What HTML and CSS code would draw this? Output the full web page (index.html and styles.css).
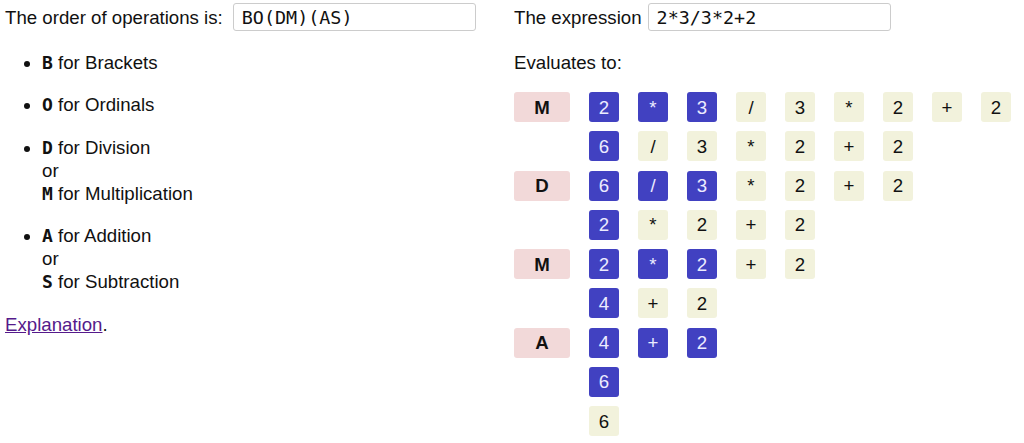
FILE: index.html
```html
<!DOCTYPE html>
<html>
<head>
<meta charset="utf-8">
<link rel="stylesheet" href="styles.css">
</head>
<body>
<div class="page">
  <div class="left">
    <div class="field">
      <span class="lbl">The order of operations is:</span>
      <input class="inp inp-order" type="text" value="BO(DM)(AS)">
    </div>
    <ul class="rules">
      <li><code>B</code> for Brackets</li>
      <li><code>O</code> for Ordinals</li>
      <li><code>D</code> for Division<br>or<br><code>M</code> for Multiplication</li>
      <li><code>A</code> for Addition<br>or<br><code>S</code> for Subtraction</li>
    </ul>
    <p class="expl"><a href="#" class="link">Explanation</a>.</p>
  </div>
  <div class="right">
    <div class="field field-r">
      <span class="lbl">The expression</span>
      <input class="inp inp-expr" type="text" value="2*3/3*2+2">
    </div>
    <p class="eval">Evaluates to:</p>
    <div class="steps">
      <div class="row"><span class="op">M</span><span class="t b">2</span><span class="t b">*</span><span class="t b">3</span><span class="t">/</span><span class="t">3</span><span class="t">*</span><span class="t">2</span><span class="t">+</span><span class="t">2</span></div>
      <div class="row"><span class="op empty"></span><span class="t b">6</span><span class="t">/</span><span class="t">3</span><span class="t">*</span><span class="t">2</span><span class="t">+</span><span class="t">2</span></div>
      <div class="row"><span class="op">D</span><span class="t b">6</span><span class="t b">/</span><span class="t b">3</span><span class="t">*</span><span class="t">2</span><span class="t">+</span><span class="t">2</span></div>
      <div class="row"><span class="op empty"></span><span class="t b">2</span><span class="t">*</span><span class="t">2</span><span class="t">+</span><span class="t">2</span></div>
      <div class="row"><span class="op">M</span><span class="t b">2</span><span class="t b">*</span><span class="t b">2</span><span class="t">+</span><span class="t">2</span></div>
      <div class="row"><span class="op empty"></span><span class="t b">4</span><span class="t">+</span><span class="t">2</span></div>
      <div class="row"><span class="op">A</span><span class="t b">4</span><span class="t b">+</span><span class="t b">2</span></div>
      <div class="row"><span class="op empty"></span><span class="t b">6</span></div>
      <div class="row"><span class="op empty"></span><span class="t">6</span></div>
    </div>
  </div>
</div>
</body>
</html>
```

FILE: styles.css
```css
html, body {
  margin: 0;
  padding: 0;
  background: #fff;
}
body {
  font-family: "Liberation Sans", Arial, sans-serif;
  font-size: 18.67px;
  line-height: 23px;
  color: #111;
}
.page {
  display: flex;
  padding-left: 5px;
}
.left {
  width: 509px;
  flex: none;
}
.right {
  flex: 1;
}
.field {
  display: flex;
  align-items: center;
  gap: 10px;
  margin-top: 3px;
  height: 28px;
}
.field-r {
  gap: 6px;
}
.inp {
  box-sizing: border-box;
  width: 243px;
  height: 28px;
  border: 1px solid #ccc;
  border-radius: 3px;
  padding: 0 0 0 8px;
  margin: 0;
  font-family: "DejaVu Sans Mono", monospace;
  font-size: 18.4px;
  color: #111;
  background: #fff;
  outline: none;
}
.rules {
  margin: 19.5px 0 0 0;
  padding-left: 37px;
}
.rules li {
  margin-bottom: 19.5px;
}
.rules code {
  font-family: "DejaVu Sans Mono", monospace;
  font-weight: bold;
  font-size: 18px;
}
.expl {
  margin: 0;
}
.link {
  color: #551a8b;
  text-decoration: underline;
}
.eval {
  margin: 19.5px 0 0 0;
}
.steps {
  margin-top: 18.5px;
  display: flex;
  flex-direction: column;
  gap: 9.25px;
}
.row {
  display: flex;
  gap: 19px;
  height: 30px;
}
.op, .t {
  display: flex;
  align-items: center;
  justify-content: center;
  height: 30px;
  border-radius: 3px;
  font-size: 18.67px;
}
.op {
  width: 56px;
  background: #f2d9d9;
  font-weight: bold;
  color: #111;
}
.op.empty {
  background: transparent;
}
.t {
  width: 30px;
  background: #f2f2dc;
  color: #111;
}
.t.b {
  background: #4141c1;
  color: #ececff;
}
```
